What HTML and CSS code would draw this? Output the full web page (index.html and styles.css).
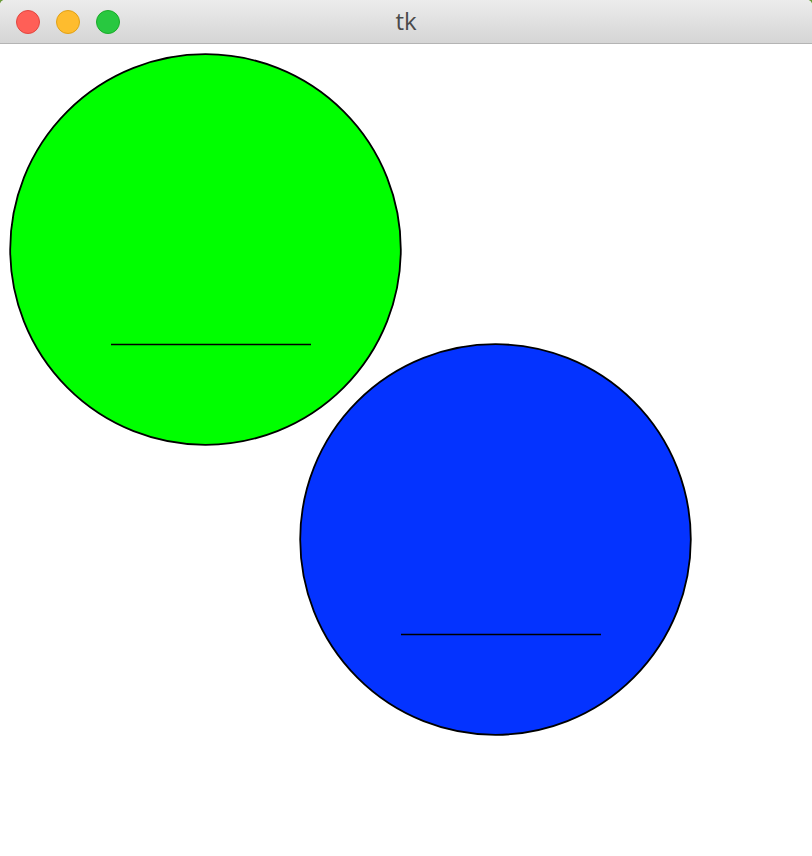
FILE: index.html
```html
<!DOCTYPE html>
<html>
<head>
<meta charset="utf-8">
<link rel="stylesheet" href="styles.css">
</head>
<body>
<div class="window">
  <div class="titlebar">
    <div class="lights">
      <span class="light red"></span>
      <span class="light yellow"></span>
      <span class="light green"></span>
    </div>
    <div class="title">tk</div>
  </div>
  <svg class="canvas" width="812" height="812" viewBox="0 0 812 812">
    <circle cx="205.5" cy="205.5" r="195.3" fill="#00ff00" stroke="#000" stroke-width="1.8"/>
    <line x1="111" y1="300.5" x2="311" y2="300.5" stroke="#000" stroke-width="1.6"/>
    <circle cx="495.5" cy="495.5" r="195.3" fill="#0433ff" stroke="#000" stroke-width="1.8"/>
    <line x1="401" y1="590.5" x2="601" y2="590.5" stroke="#000" stroke-width="1.6"/>
  </svg>
</div>
</body>
</html>
```
FILE: styles.css
```css
html, body {
  margin: 0;
  padding: 0;
  background: #6a9a3a;
  overflow: hidden;
}
.window {
  width: 812px;
  height: 856px;
  background: #ffffff;
  border-radius: 5px 5px 0 0;
  overflow: hidden;
  display: flex;
  flex-direction: column;
}
.titlebar {
  position: relative;
  height: 43px;
  flex: none;
  background: linear-gradient(#ececec, #d5d5d5);
  border-bottom: 1px solid #b4b4b4;
  display: flex;
  align-items: center;
  justify-content: center;
}
.lights {
  position: absolute;
  left: 16px;
  top: 10px;
  display: flex;
  gap: 16px;
}
.light {
  width: 24px;
  height: 24px;
  border-radius: 50%;
  box-sizing: border-box;
}
.red { background: #ff5f57; border: 1px solid #e2463f; }
.yellow { background: #febc2e; border: 1px solid #e1a116; }
.green { background: #28c840; border: 1px solid #1aab29; }
.title {
  font-family: "Open Sans", "Liberation Sans", sans-serif;
  font-size: 24px;
  color: #4a4a4a;
  line-height: 1;
  margin-top: -1px;
}
.canvas {
  display: block;
  flex: none;
}
```
